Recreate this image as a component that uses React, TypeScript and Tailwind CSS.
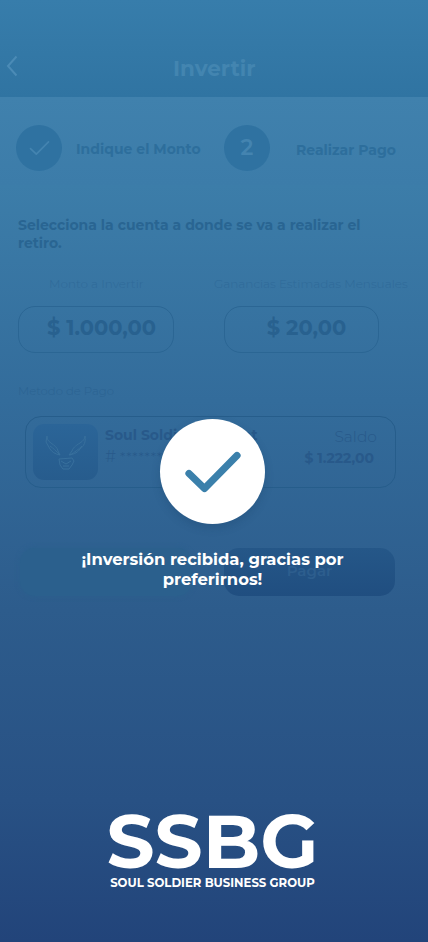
import type { ReactNode } from 'react'

function Check({ className, width }: { className: string; width: number }) {
  return (
    <svg viewBox="0 0 56 42" fill="none" className={className}>
      <path
        d="M4 22.500 19.500 37.500 52 4.500"
        stroke="currentColor"
        strokeWidth={width}
        strokeLinecap="round"
        strokeLinejoin="round"
      />
    </svg>
  )
}

function StepCircle({ children }: { children: ReactNode }) {
  return (
    <div className="flex size-[46px] shrink-0 items-center justify-center rounded-full bg-[#2f72a1] text-[#4484b0]">
      {children}
    </div>
  )
}

function DeerLogo() {
  return (
    <div className="flex h-14 w-[65px] shrink-0 items-center justify-center rounded-[11px] bg-linear-to-b from-[#2b6598] to-[#275c8d]">
      <svg viewBox="0 0 42 36" fill="none" className="mt-0.5 h-9 w-[42px] text-[#38709d]">
        <path
          d="M2 1c0 3 1 5 4 7 4 3 6 4 7 8l2 4c-5-1-8-3-10-6L1 7 2 1ZM5 11c3 2 6 5 10 9M40 1c0 3-2 5-5 7-5 3-7 5-8 8l-3 4c6-1 9-3 11-6 4-3 6-7 5-13ZM37 11c-3 3-7 6-12 9M14 24l13-1 2 3-2 4-3 4h-6l-3-4-1-6ZM16 26l5 3 5-3M18 31h6"
          stroke="currentColor"
          strokeWidth="1"
          strokeLinejoin="round"
        />
      </svg>
    </div>
  )
}

function InvestScreen() {
  return (
    <div className="flex flex-col">
      <header className="flex h-[97px] items-end bg-linear-to-b from-[#377dab] to-[#3074a2] pb-[17px] pl-[6px]">
        <svg viewBox="0 0 12 22" fill="none" className="mb-[3px] h-[22px] w-3 text-[#4b8bb6]">
          <path d="M10.500 1.500 2 11l8.500 9.500" stroke="currentColor" strokeWidth="2" />
        </svg>
        <h1 className="ml-[155px] text-[21.500px] leading-6 font-bold text-[#4385b0]">Invertir</h1>
      </header>

      <div className="flex h-[88px] items-center bg-linear-to-b from-[#4081ad] to-[#3c7ca9] pt-[13px] pl-4 text-[14px] font-bold text-[#2d6e9c]">
        <StepCircle>
          <Check className="h-4 w-[21px]" width={4.5} />
        </StepCircle>
        <span className="ml-[14px] w-[148px] pt-1 whitespace-nowrap">Indique el Monto</span>
        <StepCircle>
          <span className="text-[22px] font-semibold">2</span>
        </StepCircle>
        <span className="ml-[26px] pt-[6px] whitespace-nowrap">Realizar Pago</span>
      </div>

      <p className="mt-[31px] ml-[18px] text-[14px] leading-[18px] font-bold text-[#296592]">
        Selecciona la cuenta a donde se va a realizar el
        <br />
        retiro.
      </p>

      <div className="mt-[22px] flex pl-[18px] text-[#2d6695]">
        <div className="w-[206px]">
          <p className="ml-[31px] h-8 text-[12px] leading-[19px] font-light whitespace-nowrap text-[#2f6a99]">
            Monto a Invertir
          </p>
          <div className="flex h-[47px] w-[156px] items-center justify-center rounded-[17px] border border-[#2b6694] pb-1 pl-[11px] text-[21px] font-bold text-[#28618f]">
            $ 1.000,00
          </div>
        </div>
        <div>
          <p className="-ml-[10px] h-8 text-[12px] leading-[19px] font-light whitespace-nowrap text-[#2f6a99]">
            Ganancias Estimadas Mensuales
          </p>
          <div className="flex h-[47px] w-[155px] items-center justify-center rounded-[17px] border border-[#2b6694] pb-1 pl-[10px] text-[21px] font-bold text-[#28618f]">
            $ 20,00
          </div>
        </div>
      </div>

      <p className="mt-[29px] ml-[18px] text-[11.700px] leading-[18px] font-light text-[#2b6392]">Metodo de Pago</p>

      <div className="mt-4 ml-[25px] flex h-[72px] w-[371px] rounded-[16px] border border-[#265d8b] pt-[7px] pl-[7px] text-[#28598a]">
        <DeerLogo />
        <div className="ml-[7px] w-[190px] pt-px">
          <p className="text-[14px] leading-5 font-bold whitespace-nowrap">Soul Soldier Account</p>
          <p className="flex gap-1 text-[16px] leading-6 font-light">
            # <span className="text-[14px] tracking-[0.6px]">**********</span>
          </p>
        </div>
        <div className="flex w-[79px] flex-col items-end pt-[2px]">
          <p className="-mr-[3px] text-[15.500px] leading-[22px] font-light">Saldo</p>
          <p className="text-[14px] leading-5 font-bold whitespace-nowrap">$ 1.222,00</p>
        </div>
      </div>

      <div className="mt-15 ml-5 flex gap-[32px] text-[15px] font-semibold">
        <div className="h-12 w-[172px] rounded-[15px] bg-[#2b608d] shadow-[0_0_5px_#2b608d]" />
        <div className="flex h-12 w-[171px] items-center justify-center rounded-[15px] bg-linear-to-b from-[#255788] to-[#204e80] pb-0.5 text-[#2d5e8e]">
          Pagar
        </div>
      </div>
    </div>
  )
}

function SuccessOverlay() {
  return (
    <div className="absolute inset-0 flex flex-col items-center pt-[419px] pr-[3px] text-white">
      <div className="flex size-[105px] items-center justify-center rounded-full bg-white text-[#3b80ab] shadow-[0_4px_8px_rgba(20,55,90,0.22)]">
        <Check className="h-[42px] w-14" width={7.2} />
      </div>
      <p className="mt-[25px] text-center text-[16.400px] leading-5 font-bold whitespace-nowrap">
        ¡Inversión recibida, gracias por
        <br />
        preferirnos!
      </p>
      <div className="mt-[218px] flex flex-col items-center">
        <p className="text-[75.400px] leading-[68px] font-bold">SSBG</p>
        <p className="mt-px text-[11.700px] leading-[14px] font-bold whitespace-nowrap">SOUL SOLDIER BUSINESS GROUP</p>
      </div>
    </div>
  )
}

export default function App() {
  return (
    <main className="relative h-[942px] w-full overflow-hidden bg-[linear-gradient(180deg,#3c7da9_185px,#336c9b_400px,#2d5c8c_610px,#285184_800px,#22447a_942px)] font-['Montserrat','Inter',sans-serif]">
      <InvestScreen />
      <SuccessOverlay />
    </main>
  )
}
